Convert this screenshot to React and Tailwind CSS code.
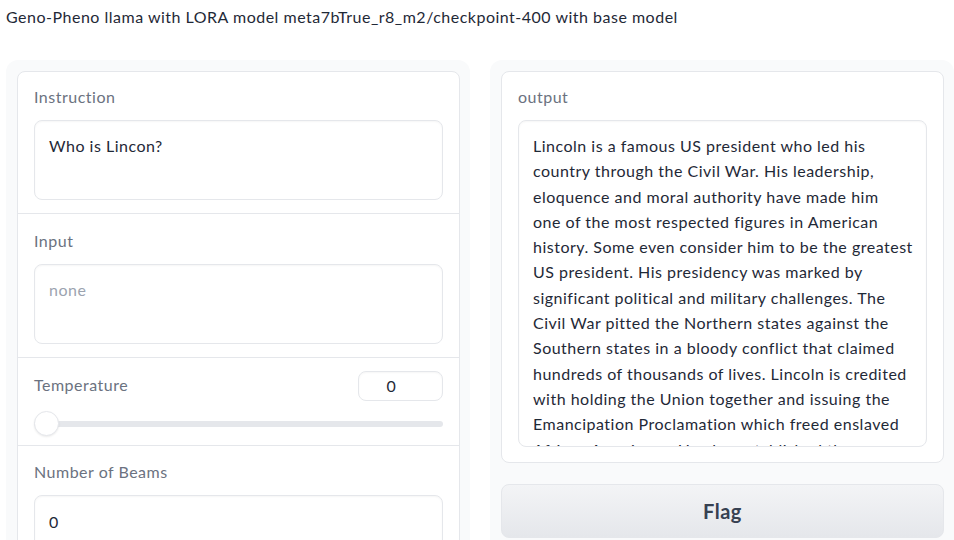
import React from 'react';

const outputLines = [
    'Lincoln is a famous US president who led his',
    'country through the Civil War. His leadership,',
    'eloquence and moral authority have made him',
    'one of the most respected figures in American',
    'history. Some even consider him to be the greatest',
    'US president. His presidency was marked by',
    'significant political and military challenges. The',
    'Civil War pitted the Northern states against the',
    'Southern states in a bloody conflict that claimed',
    'hundreds of thousands of lives. Lincoln is credited',
    'with holding the Union together and issuing the',
    'Emancipation Proclamation which freed enslaved',
    'African Americans. He also established the',
    'foundations for the modern United States.',
];

const Label = ({ className = '', children }) => (
    <div className={`text-[16px] leading-5 text-[#6b7280] ${className}`}>{children}</div>
);

const Box = ({ className = '', children }) => (
    <div className={`rounded-lg border border-[#e5e7eb] bg-white shadow-[inset_0_1px_2px_rgba(0,0,0,0.04)] ${className}`}>
        {children}
    </div>
);

const App = () => {
    return (
        <div className="w-[954px] h-[540px] overflow-hidden bg-white text-[#1f2937] tracking-[0.5px] font-['Lato',sans-serif]">
            {/* Title */}
            <div className="pl-[6px] pt-[7px] text-[16px] leading-5">
                Geno-Pheno llama with LORA model meta7bTrue_r8_m2/checkpoint-400 with base model
            </div>

            <div className="flex gap-5 pl-[6px] mt-[33px]">
                {/* Left panel */}
                <div className="w-[464px] h-[480px] bg-[#f9fafb] rounded-t-xl pl-[11px] pr-[10px] pt-[11px]">
                    <div className="rounded-lg border border-[#e5e7eb] bg-white h-[500px]">
                        <div className="px-4 pt-[15px] pb-[13px] border-b border-[#e5e7eb]">
                            <Label>Instruction</Label>
                            <Box className="mt-[13px] h-[80px] px-[14px] pt-[13px]">
                                <div className="text-[16px] leading-6">Who is Lincon?</div>
                            </Box>
                        </div>
                        <div className="px-4 pt-[17px] pb-[13px] border-b border-[#e5e7eb]">
                            <Label>Input</Label>
                            <Box className="mt-[13px] h-[80px] px-[14px] pt-[13px]">
                                <div className="text-[16px] leading-6 text-[#9ca3af]">none</div>
                            </Box>
                        </div>
                        <div className="px-4 pt-[15px] pb-[9px] border-b border-[#e5e7eb]">
                            <div className="flex justify-between items-start h-[28px]">
                                <Label className="pt-[2px]">Temperature</Label>
                                <Box className="-mt-[2px] w-[85px] h-[30px] flex items-center justify-center pr-[18px] text-[16px]">
                                    0
                                </Box>
                            </div>
                            <div className="relative mt-[10px] h-[25px] flex items-center">
                                <div className="w-full h-[6px] rounded-full bg-[#e5e7eb]" />
                                <div className="absolute left-0 top-0 w-[25px] h-[25px] rounded-full bg-white border border-[#e5e7eb] shadow-[0_1px_2px_rgba(0,0,0,0.08)]" />
                            </div>
                        </div>
                        <div className="px-4 pt-[16px]">
                            <Label>Number of Beams</Label>
                            <Box className="mt-[13px] h-[60px] px-[14px] pt-[14px]">
                                <div className="text-[16px] leading-6">0</div>
                            </Box>
                        </div>
                    </div>
                </div>

                {/* Right panel */}
                <div className="w-[464px] h-[480px] bg-[#f9fafb] rounded-t-xl pl-[11px] pr-[10px] pt-[11px] flex flex-col gap-[21px]">
                    <div className="rounded-lg border border-[#e5e7eb] bg-white px-4 pt-[15px] pb-[15px]">
                        <Label>output</Label>
                        <Box className="mt-[13px] h-[327px] overflow-hidden px-[14px] pt-[12px]">
                            <div className="text-[16px] leading-[25.3px] text-[#1f2937]">
                                {outputLines.map((line) => (
                                    <div key={line} className="whitespace-nowrap">{line}</div>
                                ))}
                            </div>
                        </Box>
                    </div>
                    <button className="h-[54px] rounded-lg border border-[#e5e7eb] bg-gradient-to-b from-[#f3f4f6] to-[#e5e7eb] text-[20px] font-bold text-[#374151]">
                        Flag
                    </button>
                </div>
            </div>
        </div>
    );
};

export default App;
